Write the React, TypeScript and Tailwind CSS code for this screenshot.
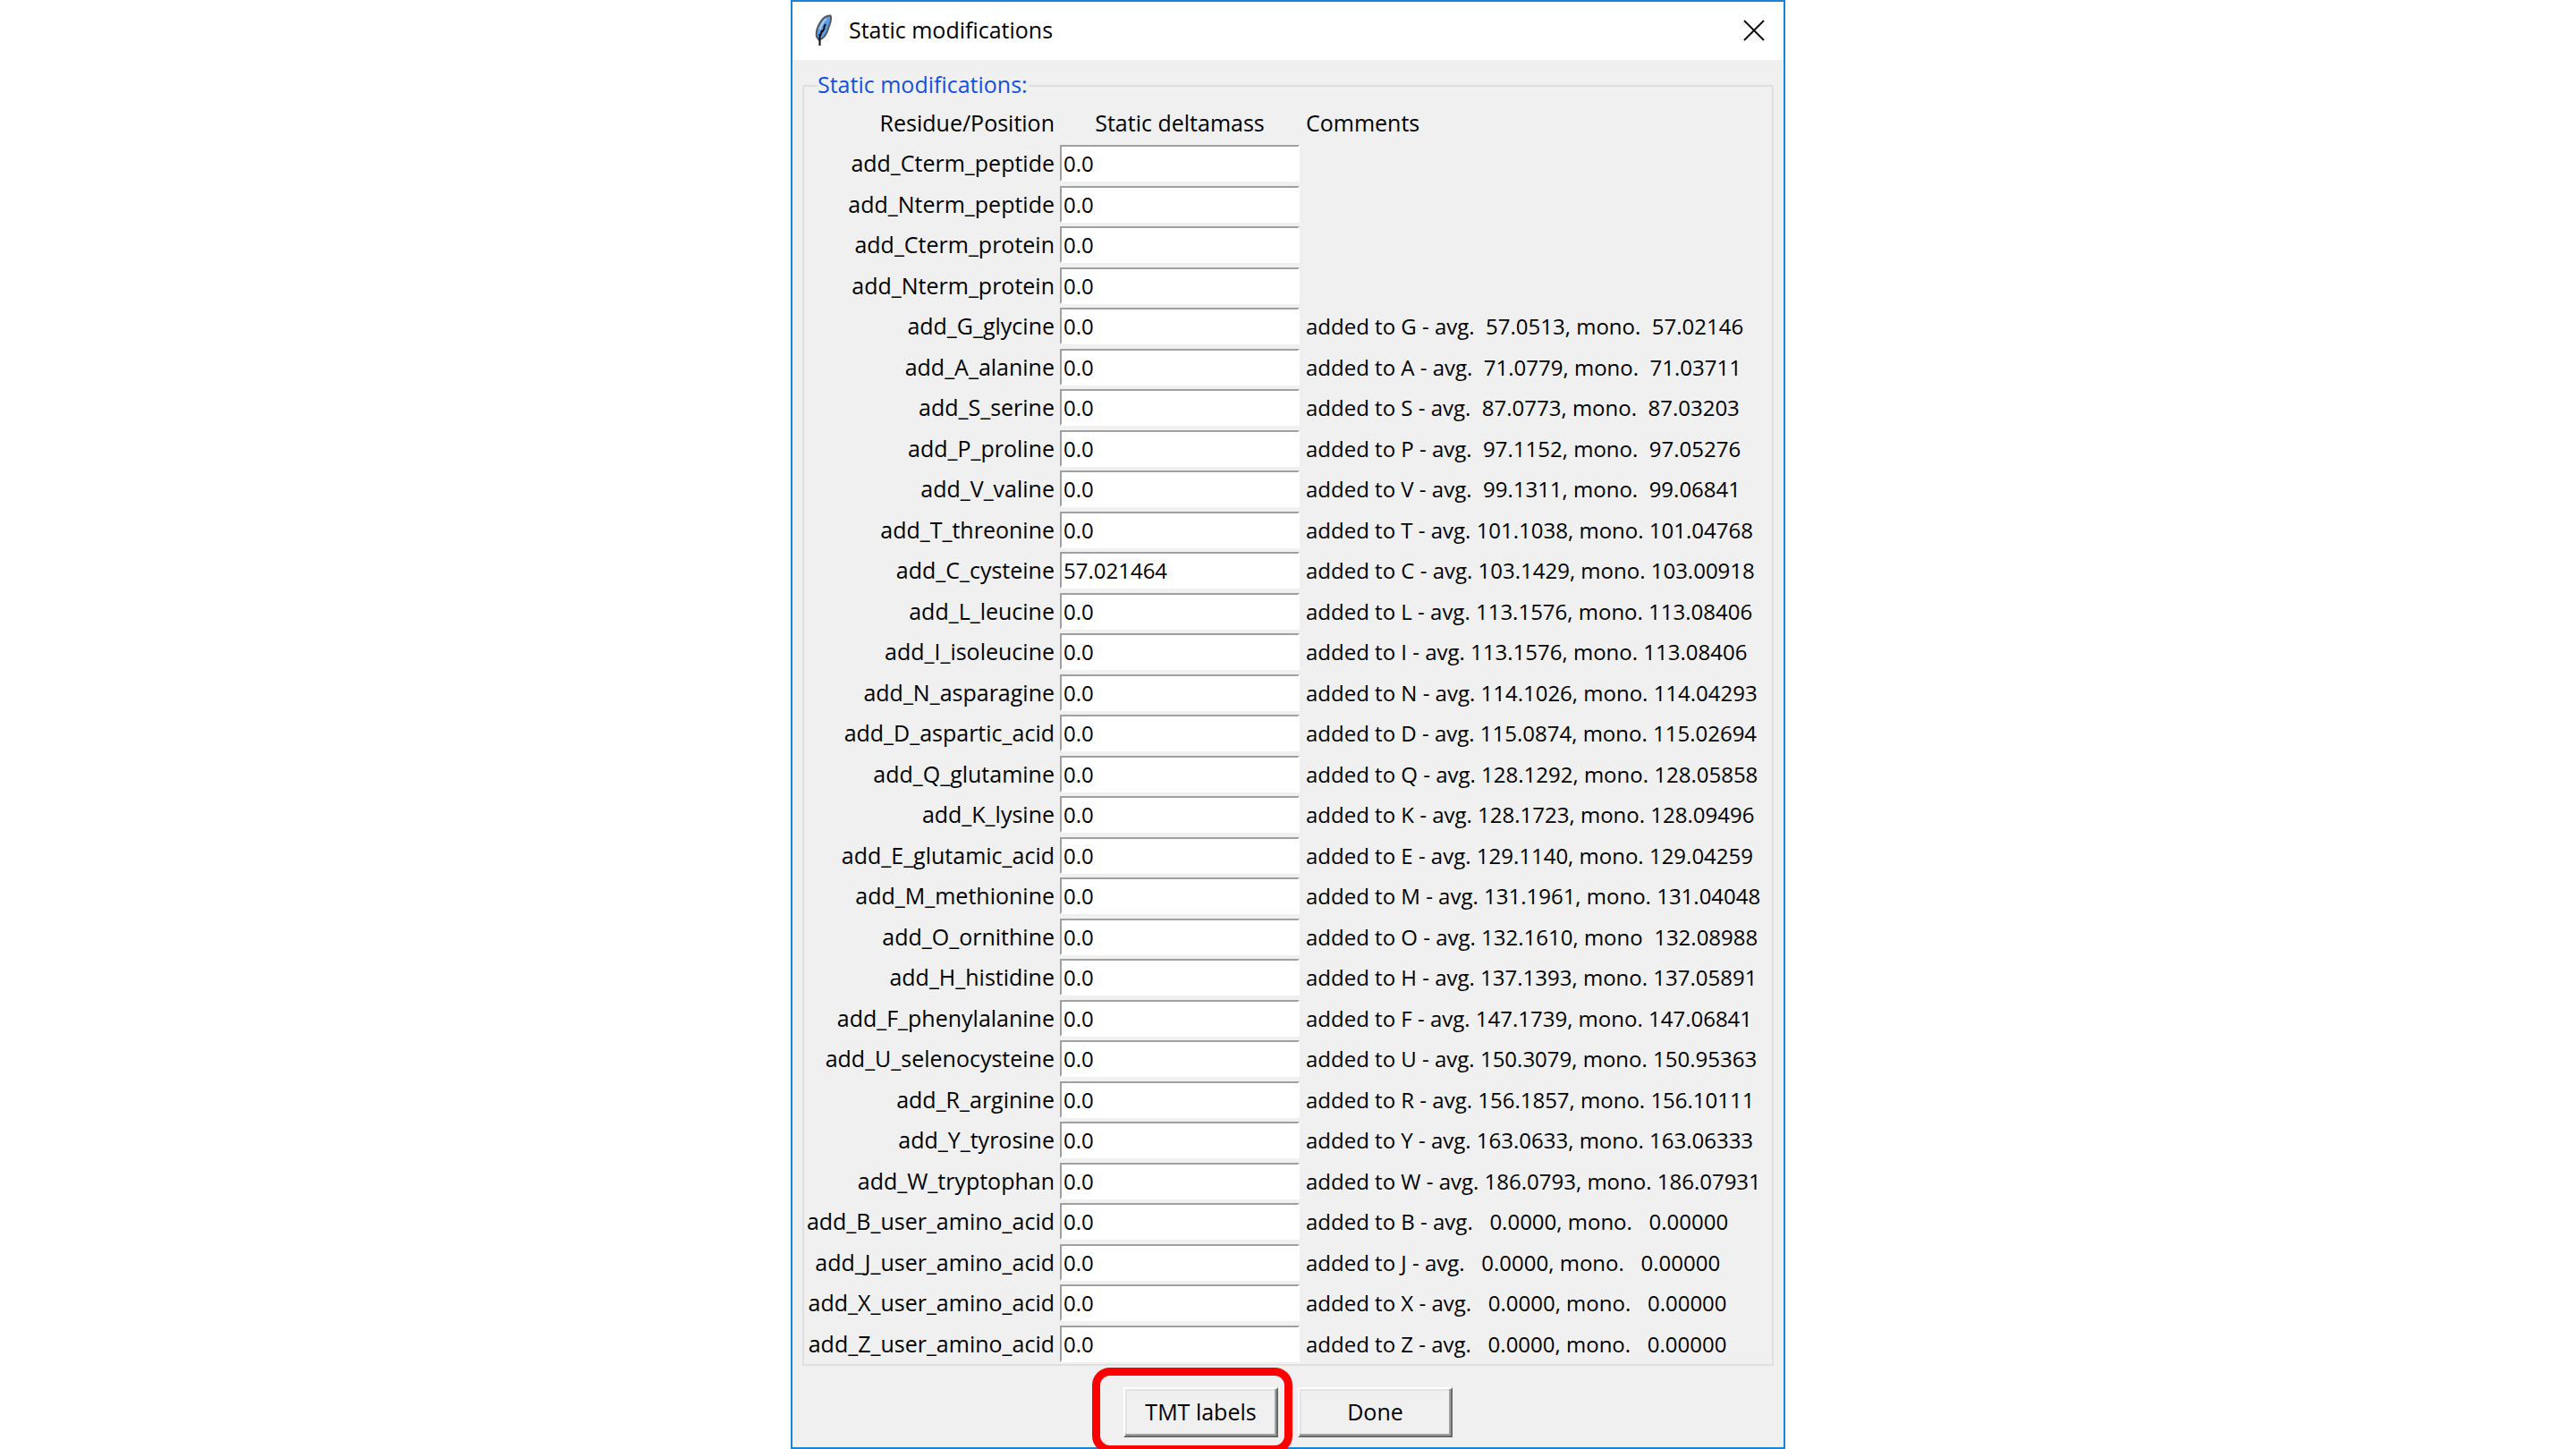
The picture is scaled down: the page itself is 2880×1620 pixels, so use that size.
import React from 'react';

type Row = { name: string; value?: string; comment?: string };

const rows: Row[] = [
  { name: 'add_Cterm_peptide' },
  { name: 'add_Nterm_peptide' },
  { name: 'add_Cterm_protein' },
  { name: 'add_Nterm_protein' },
  { name: 'add_G_glycine', comment: 'added to G - avg.  57.0513, mono.  57.02146' },
  { name: 'add_A_alanine', comment: 'added to A - avg.  71.0779, mono.  71.03711' },
  { name: 'add_S_serine', comment: 'added to S - avg.  87.0773, mono.  87.03203' },
  { name: 'add_P_proline', comment: 'added to P - avg.  97.1152, mono.  97.05276' },
  { name: 'add_V_valine', comment: 'added to V - avg.  99.1311, mono.  99.06841' },
  { name: 'add_T_threonine', comment: 'added to T - avg. 101.1038, mono. 101.04768' },
  { name: 'add_C_cysteine', value: '57.021464', comment: 'added to C - avg. 103.1429, mono. 103.00918' },
  { name: 'add_L_leucine', comment: 'added to L - avg. 113.1576, mono. 113.08406' },
  { name: 'add_I_isoleucine', comment: 'added to I - avg. 113.1576, mono. 113.08406' },
  { name: 'add_N_asparagine', comment: 'added to N - avg. 114.1026, mono. 114.04293' },
  { name: 'add_D_aspartic_acid', comment: 'added to D - avg. 115.0874, mono. 115.02694' },
  { name: 'add_Q_glutamine', comment: 'added to Q - avg. 128.1292, mono. 128.05858' },
  { name: 'add_K_lysine', comment: 'added to K - avg. 128.1723, mono. 128.09496' },
  { name: 'add_E_glutamic_acid', comment: 'added to E - avg. 129.1140, mono. 129.04259' },
  { name: 'add_M_methionine', comment: 'added to M - avg. 131.1961, mono. 131.04048' },
  { name: 'add_O_ornithine', comment: 'added to O - avg. 132.1610, mono  132.08988' },
  { name: 'add_H_histidine', comment: 'added to H - avg. 137.1393, mono. 137.05891' },
  { name: 'add_F_phenylalanine', comment: 'added to F - avg. 147.1739, mono. 147.06841' },
  { name: 'add_U_selenocysteine', comment: 'added to U - avg. 150.3079, mono. 150.95363' },
  { name: 'add_R_arginine', comment: 'added to R - avg. 156.1857, mono. 156.10111' },
  { name: 'add_Y_tyrosine', comment: 'added to Y - avg. 163.0633, mono. 163.06333' },
  { name: 'add_W_tryptophan', comment: 'added to W - avg. 186.0793, mono. 186.07931' },
  { name: 'add_B_user_amino_acid', comment: 'added to B - avg.   0.0000, mono.   0.00000' },
  { name: 'add_J_user_amino_acid', comment: 'added to J - avg.   0.0000, mono.   0.00000' },
  { name: 'add_X_user_amino_acid', comment: 'added to X - avg.   0.0000, mono.   0.00000' },
  { name: 'add_Z_user_amino_acid', comment: 'added to Z - avg.   0.0000, mono.   0.00000' },
];

function FeatherIcon() {
  return (
    <svg aria-hidden="true" viewBox="0 0 20 36" className="h-9 w-5 shrink-0">
      <path
        d="M17.500 1.500 C12 1 9 4 6 9 C3 14 1 20 2 25 L4.500 28.500 C10 27.500 13 23 15 16 C17 10 19.500 6 17.500 1.500 Z"
        fill="#5b9ee6"
        stroke="#55595e"
        strokeWidth="2"
      />
      <path d="M13 5 C9 8 7 12 5.500 17" fill="none" stroke="#a9cdf2" strokeWidth="2" />
      <path d="M12 11 L10 15 M11 15 L8 20 M8 18 L6 24" fill="none" stroke="#0a0a0a" strokeWidth="2" />
      <path d="M5.500 22 V35" fill="none" stroke="#0a0a0a" strokeWidth="2" />
    </svg>
  );
}

function TitleBar() {
  return (
    <header className="flex h-[65px] items-center bg-white pr-[21px] pb-[2px] pl-[25px]">
      <FeatherIcon />
      <h1 className="ml-[18px] flex-1 text-[25px]">Static modifications</h1>
      <button type="button" aria-label="Close" className="flex items-center justify-center">
        <svg aria-hidden="true" viewBox="0 0 24 24" className="size-6">
          <path d="M1 1 L23 23 M23 1 L1 23" stroke="#111111" strokeWidth="2" fill="none" />
        </svg>
      </button>
    </header>
  );
}

function ModificationsTable() {
  return (
    <table className="w-full table-fixed border-collapse text-[24px] leading-[41px]">
      <colgroup>
        <col className="w-[286px]" />
        <col className="w-[268px]" />
        <col />
      </colgroup>
      <thead>
        <tr className="h-12 text-[25px]">
          <th scope="col" className="p-0 pr-[6px] pb-[2px] text-right font-normal">Residue/Position</th>
          <th scope="col" className="p-0 pb-[2px] text-center font-normal">Static deltamass</th>
          <th scope="col" className="p-0 pb-[2px] pl-[7px] text-left font-normal">Comments</th>
        </tr>
      </thead>
      <tbody>
        {rows.map(({ name, value = '0.0', comment }) => (
          <tr key={name} className="h-[45px] align-top last:h-[43px] odd:h-[46px]">
            <th scope="row" className="p-0 pr-[6px] text-right text-[25px] font-normal">
              <label htmlFor={name} className="block">{name}</label>
            </th>
            <td className="p-0">
              <input
                id={name}
                type="text"
                defaultValue={value}
                className="block h-[41px] w-full border-2 border-t-[#a0a0a0] border-r-white border-b-white border-l-[#a0a0a0] bg-white pl-[2px] outline-none"
              />
            </td>
            <td className="p-0 pl-[7px] whitespace-pre">{comment}</td>
          </tr>
        ))}
      </tbody>
    </table>
  );
}

function ClassicButton({ children }: { children: React.ReactNode }) {
  return (
    <button
      type="button"
      className="h-14 w-[173px] border-2 border-t-white border-r-[#696969] border-b-[#696969] border-l-white bg-[#f0f0f0] text-[25px] shadow-[inset_-2px_-2px_0_#a0a0a0,inset_2px_2px_0_#e3e3e3]"
    >
      {children}
    </button>
  );
}

export default function App() {
  return (
    <div className="min-h-screen overflow-hidden bg-white font-['Open_Sans','Noto_Sans',sans-serif] text-black">
      <main className="mx-auto flex min-h-screen w-full max-w-[1112px] flex-col border-2 border-[#1883d7] bg-[#f0f0f0]">
        <TitleBar />
        <form className="flex flex-col px-[11px] pt-[11px] pb-[11px]">
          <fieldset className="min-w-0 border-2 border-[#dfdfdf]">
            <legend className="ml-[15px] pr-px pb-1 text-[25px] leading-[32px] text-[#1450e0]">Static modifications:</legend>
            <ModificationsTable />
          </fieldset>
          <div className="mt-6 flex justify-center gap-[22px]">
            <div className="relative">
              <ClassicButton>TMT labels</ClassicButton>
              {/* Highlight ring around the TMT button */}
              <span className="pointer-events-none absolute -top-[22px] -right-4 -bottom-[18px] -left-[35px] rounded-[20px] border-[9px] border-[#ff0000]" />
            </div>
            <ClassicButton>Done</ClassicButton>
          </div>
        </form>
      </main>
    </div>
  );
}
